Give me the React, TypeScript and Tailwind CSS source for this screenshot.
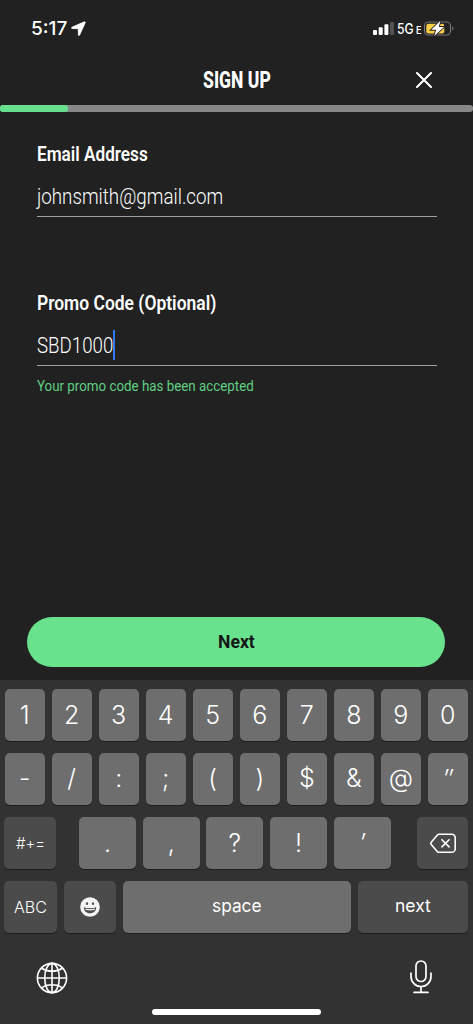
import React, { useLayoutEffect, useRef, useState } from 'react';
import clsx from 'clsx';

interface CondensedProps {
    width: number;
    className?: string;
    children: React.ReactNode;
}

// Squeezes a line of text horizontally so it takes up exactly `width` pixels
const Condensed: React.FC<CondensedProps> = ({ width, className, children }) => {
    const ref = useRef<HTMLSpanElement>(null);
    const [scale, setScale] = useState(1);

    useLayoutEffect(() => {
        if (ref.current) {
            setScale(width / ref.current.offsetWidth);
        }
    }, [width]);

    return (
        <span className="block" style={{ width }}>
            <span
                ref={ref}
                className={clsx('inline-block origin-left whitespace-nowrap', className)}
                style={{ transform: `scaleX(${scale})` }}
            >
                {children}
            </span>
        </span>
    );
};

const StatusBar = () => (
    <div className="flex h-[57px] items-center justify-between pl-[31px] pr-[18px] text-white">
        <div className="flex items-center gap-[4px]">
            <Condensed width={36} className="font-['Inter',sans-serif] text-[18.5px] leading-6 font-medium">
                5:17
            </Condensed>
            <svg className="h-[15px] w-[15px]" viewBox="0 0 15 15" fill="#fff" stroke="#fff" strokeWidth="0.8" strokeLinejoin="round">
                <path d="M13.3.8.9 6.3c-.6.4-.4 1.2.2 1.2l6.2.2.1 6.2c0 .7.9.9 1.2.2L14.2 1.7c.2-.6-.3-1.1-.9-.9Z" />
            </svg>
        </div>
        <div className="flex items-center">
            <svg className="h-[13px] w-[22px]" viewBox="0 0 22 13" fill="#fff">
                <rect x="0" y="8" width="4" height="5" rx="1" />
                <rect x="5.7" y="5.2" width="4" height="7.8" rx="1" />
                <rect x="11.4" y="2.3" width="4" height="10.7" rx="1" />
                <rect x="17" y="0" width="4" height="13" rx="1" fill="#535353" />
            </svg>
            <div className="ml-[2px] flex items-baseline gap-[2px] font-['Inter',sans-serif] leading-5 font-medium">
                <Condensed width={16.5} className="text-[14px]">5G</Condensed>
                <Condensed width={5.5} className="text-[10px] font-semibold">E</Condensed>
            </div>
            <svg className="ml-[2px] h-[17px] w-[32px]" viewBox="0 0 32 17">
                <rect x="1.5" y="2" width="26" height="13" rx="4" fill="none" stroke="#777" strokeWidth="1.1" />
                <path d="M29.2 6.4v4.2c1.8-.7 1.8-3.5 0-4.2Z" fill="#777" />
                <rect x="3.3" y="3.8" width="18" height="9.6" rx="2.2" fill="#f7ce46" />
                <path
                    d="M17.4.8 8.2 9.8h5L11.2 16l9.8-9h-5.2Z"
                    fill="#fff"
                    stroke="#212121"
                    strokeWidth="1.8"
                    paintOrder="stroke"
                />
            </svg>
        </div>
    </div>
);

interface FieldProps {
    label: React.ReactNode;
    children: React.ReactNode;
}

const Field: React.FC<FieldProps> = ({ label, children }) => (
    <div>
        <div className="h-[25px] pt-px text-[19.5px] leading-6 font-semibold">{label}</div>
        <div className="mt-[12px] flex h-[38px] border-b border-[#a0a0a0] pt-[2px] text-[22px] leading-8 font-[350]">{children}</div>
    </div>
);

interface KeyProps {
    dark?: boolean;
    className?: string;
    children: React.ReactNode;
}

const Key: React.FC<KeyProps> = ({ dark, className, children }) => (
    <button
        className={clsx(
            'flex h-[52px] items-center justify-center rounded-[5px] shadow-[0_1px_0_#1d1d1d]',
            dark ? 'bg-[#4b4b4b]' : 'bg-[#6e6e6e]',
            className ?? 'pt-[2px] text-[25px]'
        )}
    >
        {children}
    </button>
);

const digits = ['1', '2', '3', '4', '5', '6', '7', '8', '9', '0'];
const symbols = ['-', '/', ':', ';', '(', ')', '$', '&', '@', '″'];
const punctuation = ['.', ',', '?', '!', '′'];

const Keyboard = () => (
    <div className="h-[344px] bg-[#323232] pt-[9px] pr-[5px] pl-[4px] font-['Inter',sans-serif] font-[350] text-white">
        <div className="grid grid-cols-10 gap-x-[6.7px] gap-y-3 pl-[0.5px]">
            {digits.map((d) => (
                <Key key={d}>{d}</Key>
            ))}
            {symbols.map((s) => (
                <Key key={s} className={s === '″' ? 'pt-[2px] text-[25px] italic' : 'text-[25px]'}>{s}</Key>
            ))}
        </div>

        <div className="mt-3 flex">
            <Key dark className="w-[52px] text-[16px]">
                <Condensed width={29}>#+=</Condensed>
            </Key>
            <div className="ml-[23px] flex gap-[6.7px]">
                {punctuation.map((p) => (
                    <Key key={p} className={p === '′' ? 'w-[57px] pt-[2px] text-[25px] italic' : 'w-[57px] pt-[2px] text-[25px]'}>{p}</Key>
                ))}
            </div>
            <Key dark className="ml-auto w-[51px]">
                <svg className="h-[21px] w-[28px]" viewBox="0 0 28 21" fill="none" stroke="#fff" strokeWidth="1.6" strokeLinecap="round" strokeLinejoin="round">
                    <path d="M10.2 1.3h12.6a3.4 3.4 0 0 1 3.4 3.4v11.2a3.4 3.4 0 0 1-3.4 3.4H10.2c-.8 0-1.5-.3-2-.9l-6-6.9a1.7 1.7 0 0 1 0-2.3l6-7c.5-.6 1.2-.9 2-.9Z" />
                    <path d="m12.9 6.7 7.2 7.2m0-7.2-7.2 7.2" />
                </svg>
            </Key>
        </div>

        <div className="mt-3 flex gap-[7px]">
            <Key dark className="w-[53px] text-[16px]">
                <Condensed width={33}>ABC</Condensed>
            </Key>
            <Key dark className="w-[52px]">
                <svg className="h-5 w-5" viewBox="0 0 20 20">
                    <circle cx="10" cy="10" r="9.8" fill="#f4f4f4" />
                    <ellipse cx="7" cy="6.7" rx="1.1" ry="1.4" fill="#4b4b4b" />
                    <ellipse cx="13" cy="6.7" rx="1.1" ry="1.4" fill="#4b4b4b" />
                    <path d="M3.8 10.3c4 1.2 8.4 1.2 12.4 0 0 3.7-2.5 6-6.2 6s-6.2-2.3-6.2-6Z" fill="#4b4b4b" />
                    <path d="M5 11.6c3.2.8 6.8.8 10 0-.2.7-.5 1.2-.8 1.5-2.7.5-5.7.5-8.4 0-.3-.3-.6-.8-.8-1.5Z" fill="#f4f4f4" />
                </svg>
            </Key>
            <Key className="w-[228px] pb-[3px] text-[18px] font-normal">
                <Condensed width={50}>space</Condensed>
            </Key>
            <Key dark className="flex-1 pb-[3px] text-[18px] font-normal">
                <Condensed width={36}>next</Condensed>
            </Key>
        </div>

        <div className="mt-[27px] flex items-start justify-between pr-[36px] pl-[32px]">
            <svg className="mt-[2px] h-8 w-8" viewBox="0 0 32 32" fill="none" stroke="#fff" strokeWidth="1.6">
                <circle cx="16" cy="16" r="14.6" />
                <ellipse cx="16" cy="16" rx="7.3" ry="14.6" />
                <path d="M16 1.4v29.2M1.4 16h29.2M5.4 6c5.8 4.3 15.4 4.3 21.2 0M5.4 26c5.8-4.3 15.4-4.3 21.2 0" />
            </svg>
            <svg className="h-[34px] w-[22px]" viewBox="0 0 22 34" fill="none" stroke="#fff" strokeWidth="1.7" strokeLinecap="round">
                <rect x="6" y="1" width="10" height="20.5" rx="5" />
                <path d="M1 13.2v3.3a10 10 0 0 0 20 0v-3.3M11 26.5v5.5M4 32.4h14" />
            </svg>
        </div>
        <div className="mx-auto mt-[15px] h-[6px] w-[169px] rounded-full bg-white" />
    </div>
);

export default function App() {
    return (
        <div className="flex h-[1024px] w-[473px] flex-col overflow-hidden bg-[#212121] font-['Roboto',sans-serif] text-white">
            <StatusBar />

            <header className="grid h-12 grid-cols-[1fr_auto_1fr] items-center pb-[3px]">
                <h1 className="col-start-2 text-[24.5px] leading-8 font-extrabold">
                    <Condensed width={68}>SIGN UP</Condensed>
                </h1>
                <button className="mr-[41px] justify-self-end" aria-label="Close">
                    <svg className="h-4 w-4" viewBox="0 0 16 16" stroke="#fff" strokeWidth="2" strokeLinecap="round">
                        <path d="m1 1 14 14M15 1 1 15" />
                    </svg>
                </button>
            </header>

            <div className="h-[7px] rounded-[3px] bg-[#888]">
                <div className="h-full w-[67.5px] rounded-[3px] bg-[#66e08c]" />
            </div>

            <main className="flex-1 px-[36.5px] pt-[30px]">
                <Field label={<Condensed width={111}>Email Address</Condensed>}>
                    <Condensed width={186}>johnsmith@gmail.com</Condensed>
                </Field>
                <div className="mt-[74px]">
                    <Field label={<Condensed width={179}>Promo Code (Optional)</Condensed>}>
                        <Condensed width={76.5}>SBD1000</Condensed>
                        <span className="h-[30px] w-[2px] bg-[#3478f6]" />
                    </Field>
                </div>
                <p className="mt-[11px] text-[14.5px] leading-5 text-[#5fd083]">
                    <Condensed width={217}>Your promo code has been accepted</Condensed>
                </p>
            </main>

            <div className="pr-[28px] pb-[13px] pl-[27px]">
                <button className="flex h-[50px] w-full items-center justify-center rounded-full bg-[#69e28e] text-[19px] font-bold text-[#171717]">
                    <Condensed width={37}>Next</Condensed>
                </button>
            </div>

            <Keyboard />
        </div>
    );
}
